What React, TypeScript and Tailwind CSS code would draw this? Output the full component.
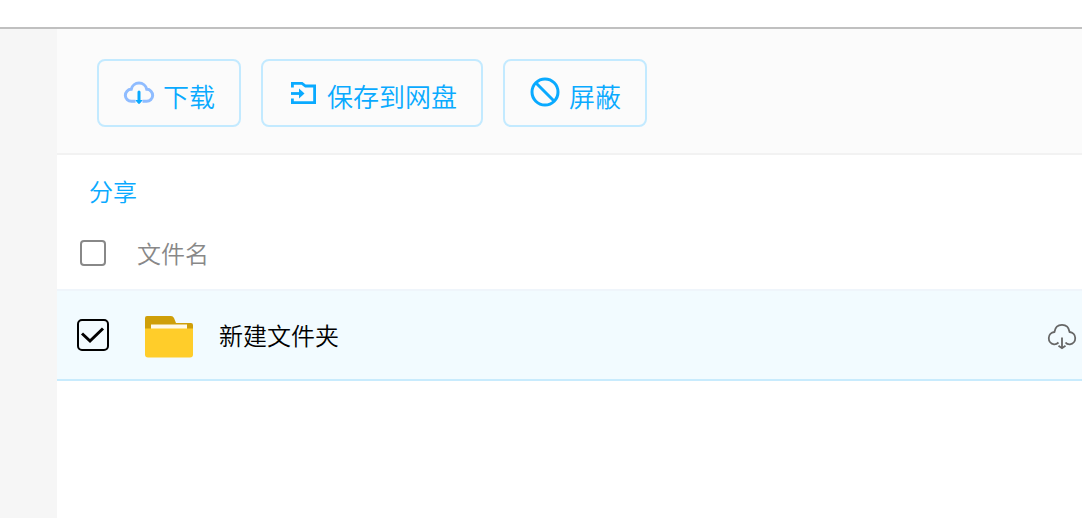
import { useState } from 'react';
import type { ReactNode } from 'react';

type FileItem = {
  id: number;
  name: string;
};

const files: FileItem[] = [{ id: 1, name: '新建文件夹' }];

function CloudDownloadIcon() {
  return (
    <svg viewBox="0 0 32 32" className="size-8" fill="none" aria-hidden="true">
      <path
        d="M12.5 25.3H8.5A6 6 0 0 1 8.2 13.3A8 8 0 0 1 23.8 13.3A6 6 0 0 1 23.5 25.3H19.5"
        stroke="#8fbcff"
        strokeWidth="3"
      />
      <path d="M16 16V26" stroke="#09aaff" strokeWidth="3" strokeLinecap="round" />
      <path d="M13 24.5H19L16 27.5Z" fill="#09aaff" stroke="#09aaff" strokeLinejoin="round" />
    </svg>
  );
}

function SaveIcon() {
  return (
    <svg viewBox="0 0 32 32" className="size-8" fill="none" aria-hidden="true">
      <path d="M5.4 11.5V7.4H15L18.5 10H27.6V26.6H5.4V22.5" stroke="#09aaff" strokeWidth="2.8" />
      <path d="M4 17.5H14" stroke="#09aaff" strokeWidth="2.8" />
      <path d="M12 12.5L17.5 17.5L12 22.5Z" fill="#09aaff" />
    </svg>
  );
}

function BlockIcon() {
  return (
    <svg viewBox="0 0 32 32" className="size-8" fill="none" aria-hidden="true">
      <circle cx="16" cy="16" r="13" stroke="#09aaff" strokeWidth="3" />
      <path d="M7 7L25 25" stroke="#09aaff" strokeWidth="3" />
    </svg>
  );
}

function FolderIcon() {
  return (
    <svg viewBox="0 0 48 48" className="size-12 shrink-0" aria-hidden="true">
      <path d="M0 7a2 2 0 0 1 2-2h24q2 0 3 2l2 5h15a2 2 0 0 1 2 2v12H0Z" fill="#cf9f09" />
      <path d="M6 13.5h36v8H6Z" fill="#fff9e8" />
      <path d="M0 17.5h48v26a3 3 0 0 1-3 3H3a3 3 0 0 1-3-3Z" fill="#ffcd2a" />
    </svg>
  );
}

function RowDownloadIcon() {
  return (
    <svg viewBox="0 0 30 30" className="size-[30px]" fill="none" stroke="#666" strokeWidth="1.8" aria-hidden="true">
      <path d="M11.5 22.5Q9.5 24.5 7 24.3A6.2 6.2 0 0 1 7.4 12Q8.5 4.8 15 4.8T22.6 12A6.2 6.2 0 0 1 23 24.3Q20 24.5 18.5 22.5" />
      <path d="M15 17.5V28M11.5 25.8L15 28.2L18.5 25.8" />
    </svg>
  );
}

function ToolButton({ icon, children }: { icon: ReactNode; children: ReactNode }) {
  return (
    <button
      type="button"
      className="flex items-start gap-2 rounded-lg border-2 border-[#c3eaff] px-6 pt-[15px] pb-[13px] text-[26px] leading-8 text-[#09aaff]"
    >
      {icon}
      <span className="pt-1">{children}</span>
    </button>
  );
}

export default function App() {
  const [selected, setSelected] = useState<number[]>([1]);

  const toggle = (id: number) => {
    setSelected(prev => (prev.includes(id) ? prev.filter(item => item !== id) : [...prev, id]));
  };

  return (
    <div className="flex min-h-screen flex-col bg-white font-['Noto_Sans_CJK_SC',sans-serif] font-[350]">
      <header className="h-[29px] border-b-2 border-[#c0c0c0]" />
      <div className="flex flex-1">
        <aside className="w-[57px] shrink-0 bg-[#f6f6f6]" />
        <main className="min-w-0 flex-1">
          <div className="flex gap-5 border-b-2 border-[#f2f2f2] bg-[#fbfbfb] px-10 pt-[30px] pb-[26px]">
            <ToolButton icon={<CloudDownloadIcon />}>下载</ToolButton>
            <ToolButton icon={<SaveIcon />}>保存到网盘</ToolButton>
            <ToolButton icon={<BlockIcon />}>屏蔽</ToolButton>
          </div>

          <nav className="flex px-8 pt-5 pb-[10px]">
            <a href="#share" className="text-2xl text-[#09aaff]">
              分享
            </a>
          </nav>

          <table className="w-full border-separate border-spacing-0 text-left text-2xl">
            <thead>
              <tr className="h-[72px]">
                <th className="w-20 pl-[23px]">
                  <input
                    type="checkbox"
                    aria-label="全选"
                    className="block size-[26px] appearance-none rounded-sm border-2 border-[#888] bg-white"
                  />
                </th>
                <th className="font-[350] text-[#888]">文件名</th>
                <th />
              </tr>
            </thead>
            <tbody>
              {files.map(file => (
                <tr key={file.id} className="h-[92px] bg-[#f2fbff]">
                  <td className="border-t-2 border-b-2 border-t-[#eff5fb] border-b-[#c8ebfd] pl-5">
                    <label className="grid size-8">
                      <input
                        type="checkbox"
                        aria-label={file.name}
                        checked={selected.includes(file.id)}
                        onChange={() => toggle(file.id)}
                        className="peer col-start-1 row-start-1 size-8 appearance-none rounded-[5px] border-2 border-black"
                      />
                      <svg
                        viewBox="0 0 32 32"
                        className="pointer-events-none invisible col-start-1 row-start-1 size-8 peer-checked:visible"
                        fill="none"
                        aria-hidden="true"
                      >
                        <path d="M5 14.5L13 22L26 9.5" stroke="#000" strokeWidth="3" />
                      </svg>
                    </label>
                  </td>
                  <td className="border-t-2 border-b-2 border-t-[#eff5fb] border-b-[#c8ebfd] pl-2">
                    <div className="flex items-center gap-[26px]">
                      <FolderIcon />
                      <span className="text-black">{file.name}</span>
                    </div>
                  </td>
                  <td className="w-20 border-t-2 border-b-2 border-t-[#eff5fb] border-b-[#c8ebfd] pr-[5px]">
                    <button type="button" aria-label="下载" className="ml-auto block">
                      <RowDownloadIcon />
                    </button>
                  </td>
                </tr>
              ))}
            </tbody>
          </table>
        </main>
      </div>
    </div>
  );
}
